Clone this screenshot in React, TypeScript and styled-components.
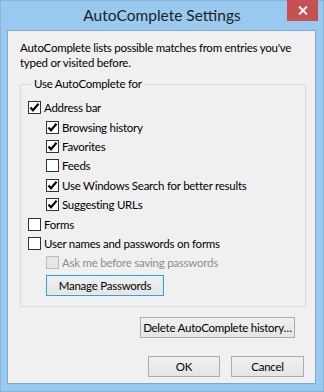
import styled, { createGlobalStyle } from 'styled-components'

const GlobalStyle = createGlobalStyle`
  html, body {
    margin: 0;
    padding: 0;
    background: #99c9ef;
  }
  body {
    font-family: Lato, 'Noto Sans', sans-serif;
    font-size: 11.5px;
    letter-spacing: -0.25px;
    color: #000;
  }
`

type Option = {
  label: string
  checked?: boolean
  disabled?: boolean
  level: 0 | 1
}

const options: Option[] = [
  { label: 'Address bar', checked: true, level: 0 },
  { label: 'Browsing history', checked: true, level: 1 },
  { label: 'Favorites', checked: true, level: 1 },
  { label: 'Feeds', level: 1 },
  { label: 'Use Windows Search for better results', checked: true, level: 1 },
  { label: 'Suggesting URLs', checked: true, level: 1 },
  { label: 'Forms', level: 0 },
  { label: 'User names and passwords on forms', level: 0 },
  { label: 'Ask me before saving passwords', disabled: true, level: 1 },
]

function CheckMark() {
  return (
    <svg width="11" height="11" viewBox="0 0 11 11">
      <path d="M1.5 5.5 L4 8.3 L9.5 1.8" fill="none" stroke="#000" strokeWidth="2.1" />
    </svg>
  )
}

export default function App() {
  return (
    <>
      <GlobalStyle />
      <Window>
        <TitleBar>
          <Title>AutoComplete Settings</Title>
          <CloseButton>
            <svg width="10" height="9" viewBox="0 0 10 9">
              <path d="M1 0.5 L9 8.5 M9 0.5 L1 8.5" stroke="#fff" strokeWidth="2" />
            </svg>
          </CloseButton>
        </TitleBar>
        <Client>
          <Intro>
            AutoComplete lists possible matches from entries you've typed or visited before.
          </Intro>
          <Group>
            <Legend>Use AutoComplete for</Legend>
            {options.map((o) => (
              <Row key={o.label} $level={o.level} $disabled={o.disabled}>
                <Box $disabled={o.disabled}>{o.checked && <CheckMark />}</Box>
                <span>{o.label}</span>
              </Row>
            ))}
            <ManageRow>
              <Button $focused $width={118}>Manage Passwords</Button>
            </ManageRow>
          </Group>
          <DeleteRow>
            <Button $width={155}>Delete AutoComplete history…</Button>
          </DeleteRow>
          <Footer>
            <Button $width={72}>OK</Button>
            <Button $width={73}>Cancel</Button>
          </Footer>
        </Client>
      </Window>
    </>
  )
}

const Window = styled.div`
  width: 324px;
  height: 392px;
  box-sizing: border-box;
  border: 1px solid #86b6dd;
  display: flex;
  flex-direction: column;
`

const TitleBar = styled.div`
  height: 29px;
  display: flex;
  justify-content: center;
  align-items: center;
  position: relative;
`

const Title = styled.div`
  font-size: 15.5px;
  letter-spacing: 0;
  color: #1e1e1e;
  margin-top: -1px;
`

const CloseButton = styled.div`
  position: absolute;
  top: -1px;
  right: 5px;
  width: 31px;
  height: 21px;
  background: #c75050;
  display: flex;
  align-items: center;
  justify-content: center;
`

const Client = styled.div`
  margin: 0 7px 7px 6px;
  flex: 1;
  background: #f0f0f0;
  border: 1px solid #7eaad0;
  display: flex;
  flex-direction: column;
  padding: 9px 11px 0 11px;
`

const Intro = styled.div`
  line-height: 15px;
  padding-left: 1px;
`

const Group = styled.fieldset`
  margin: 7px 0 0 1px;
  width: 286px;
  box-sizing: border-box;
  height: 230px;
  border: 1px solid #dcdcdc;
  padding: 7px 0 0 7px;
`

const Legend = styled.legend`
  padding: 0 2px 0 3px;
  margin-left: 3px;
  line-height: 14px;
`

const Row = styled.div<{ $level: number; $disabled?: boolean }>`
  height: 19.4px;
  display: flex;
  align-items: center;
  gap: 3px;
  padding-left: ${(p) => p.$level * 18}px;
  color: ${(p) => (p.$disabled ? '#8d8d8d' : '#000')};
  white-space: nowrap;
`

const Box = styled.div<{ $disabled?: boolean }>`
  width: 13px;
  height: 13px;
  box-sizing: border-box;
  border: 1px solid ${(p) => (p.$disabled ? '#bcbcbc' : '#333')};
  background: ${(p) => (p.$disabled ? '#e6e6e6' : '#fff')};
  display: flex;
  align-items: center;
  justify-content: center;
  flex-shrink: 0;
`

const ManageRow = styled.div`
  padding: 2px 0 0 18px;
`

const Button = styled.button<{ $width: number; $focused?: boolean }>`
  width: ${(p) => p.$width}px;
  height: 21px;
  box-sizing: border-box;
  font-family: inherit;
  font-size: inherit;
  letter-spacing: inherit;
  color: #000;
  padding: 0;
  white-space: nowrap;
  background: linear-gradient(#f0f0f0, #e5e5e5);
  border: 1px solid ${(p) => (p.$focused ? '#3399ff' : '#acacac')};
  box-shadow: ${(p) => (p.$focused ? 'inset 0 0 0 1px #e5f1fb' : 'none')};
`

const DeleteRow = styled.div`
  display: flex;
  justify-content: flex-end;
  padding: 10px 9px 0 0;
`

const Footer = styled.div`
  display: flex;
  justify-content: flex-end;
  gap: 11px;
  padding: 18px 0 0 0;
`
